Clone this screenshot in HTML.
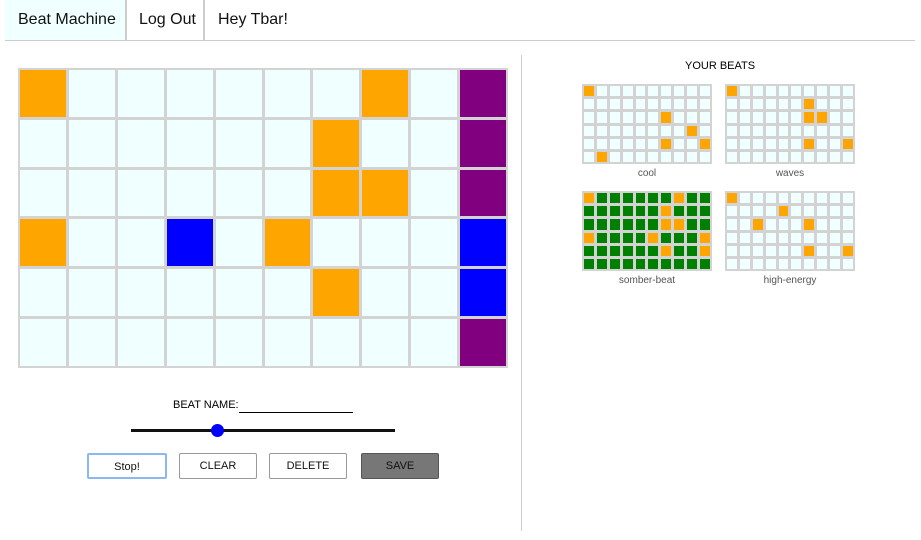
<!DOCTYPE html>
<html><head><meta charset="utf-8"><style>
*{box-sizing:border-box;margin:0;padding:0}
body{width:921px;height:540px;background:#fff;font-family:"Liberation Sans",Arial,sans-serif;position:relative;overflow:hidden}
.nav{position:absolute;left:5px;top:0;width:910px;height:41px;border-bottom:1px solid #ccc}
.nav div{position:absolute;top:0;height:40px;line-height:40px;font-size:16px;color:#111;white-space:nowrap;border-right:2px solid #ccc}
.grid{position:absolute;background:#d3d3d3;display:grid}
.grid div{background:#f0ffff}
.o{background:orange!important}.p{background:purple!important}.b{background:blue!important}.g{background:green!important}
.lbl{position:absolute;font-size:10px;color:#555;text-align:center;width:130px}
.btn{position:absolute;top:453px;height:26px;font-size:11px;text-align:center;line-height:24px;border:1px solid #999;border-radius:2px;background:#fff;color:#111}
</style></head><body>
<div class="nav"><div style="left:0;width:122px;background:#f0ffff;padding-left:13px">Beat Machine</div><div style="left:122px;width:78px;padding-left:12px">Log Out</div><div style="left:200px;border:none;padding-left:13px">Hey Tbar!</div></div>
<div style="position:absolute;left:521px;top:55px;width:1px;height:476px;background:#ccc"></div>
<div style="position:absolute;left:173px;top:399px;font-size:11px">BEAT NAME:</div>
<div style="position:absolute;left:239px;top:412px;width:114px;height:1px;background:#000"></div>
<div style="position:absolute;left:131px;top:429px;width:264px;height:3px;background:#111"></div>
<div style="position:absolute;left:211px;top:424px;width:13px;height:13px;border-radius:50%;background:blue"></div>
<div class="btn" style="left:87px;width:80px;border:2px solid #8ab8f0">Stop!</div>
<div class="btn" style="left:179px;width:78px">CLEAR</div>
<div class="btn" style="left:269px;width:78px">DELETE</div>
<div class="btn" style="left:361px;width:78px;background:#777;border-color:#555">SAVE</div>
<div style="position:absolute;left:685px;top:60px;font-size:11px">YOUR BEATS</div>
<div class="lbl" style="left:582px;top:168px">cool</div>
<div class="lbl" style="left:725px;top:168px">waves</div>
<div class="lbl" style="left:582px;top:275px">somber-beat</div>
<div class="lbl" style="left:725px;top:275px">high-energy</div>
<script>
function mk(l,t,w,h,pad,gap,cells,def){var d=document.createElement('div');d.className='grid';d.style.cssText='left:'+l+'px;top:'+t+'px;width:'+w+'px;height:'+h+'px;padding:'+pad+'px;gap:'+gap+'px;grid-template-columns:repeat(10,1fr);grid-template-rows:repeat(6,1fr)';
for(var r=0;r<6;r++)for(var c=0;c<10;c++){var e=document.createElement('div');var k=cells[r+','+c]||def;if(k)e.className=k;d.appendChild(e);}document.body.appendChild(d);}
function m(list,cls){var o={};list.forEach(function(x){o[x]=cls});return o}
var main=m(['0,0','0,7','1,6','2,6','2,7','3,0','3,5','4,6'],'o');
for(var r=0;r<6;r++)main[r+',9']=(r==3||r==4)?'b':'p';main['3,3']='b';
mk(18,68,490,300,2,3,main,'');
mk(582,84,130,80,2,3,m(['0,0','2,6','3,8','4,6','4,9','5,1'],'o'),'');
mk(725,84,130,80,2,3,m(['0,0','1,6','2,6','2,7','4,6','4,9'],'o'),'');
mk(582,191,130,80,2,3,m(['0,0','0,7','1,6','2,6','2,7','3,0','3,5','3,9','4,6','4,9'],'o'),'g');
mk(725,191,130,80,2,3,m(['0,0','1,4','2,2','2,6','4,6','4,9'],'o'),'');
</script>
</body></html>
